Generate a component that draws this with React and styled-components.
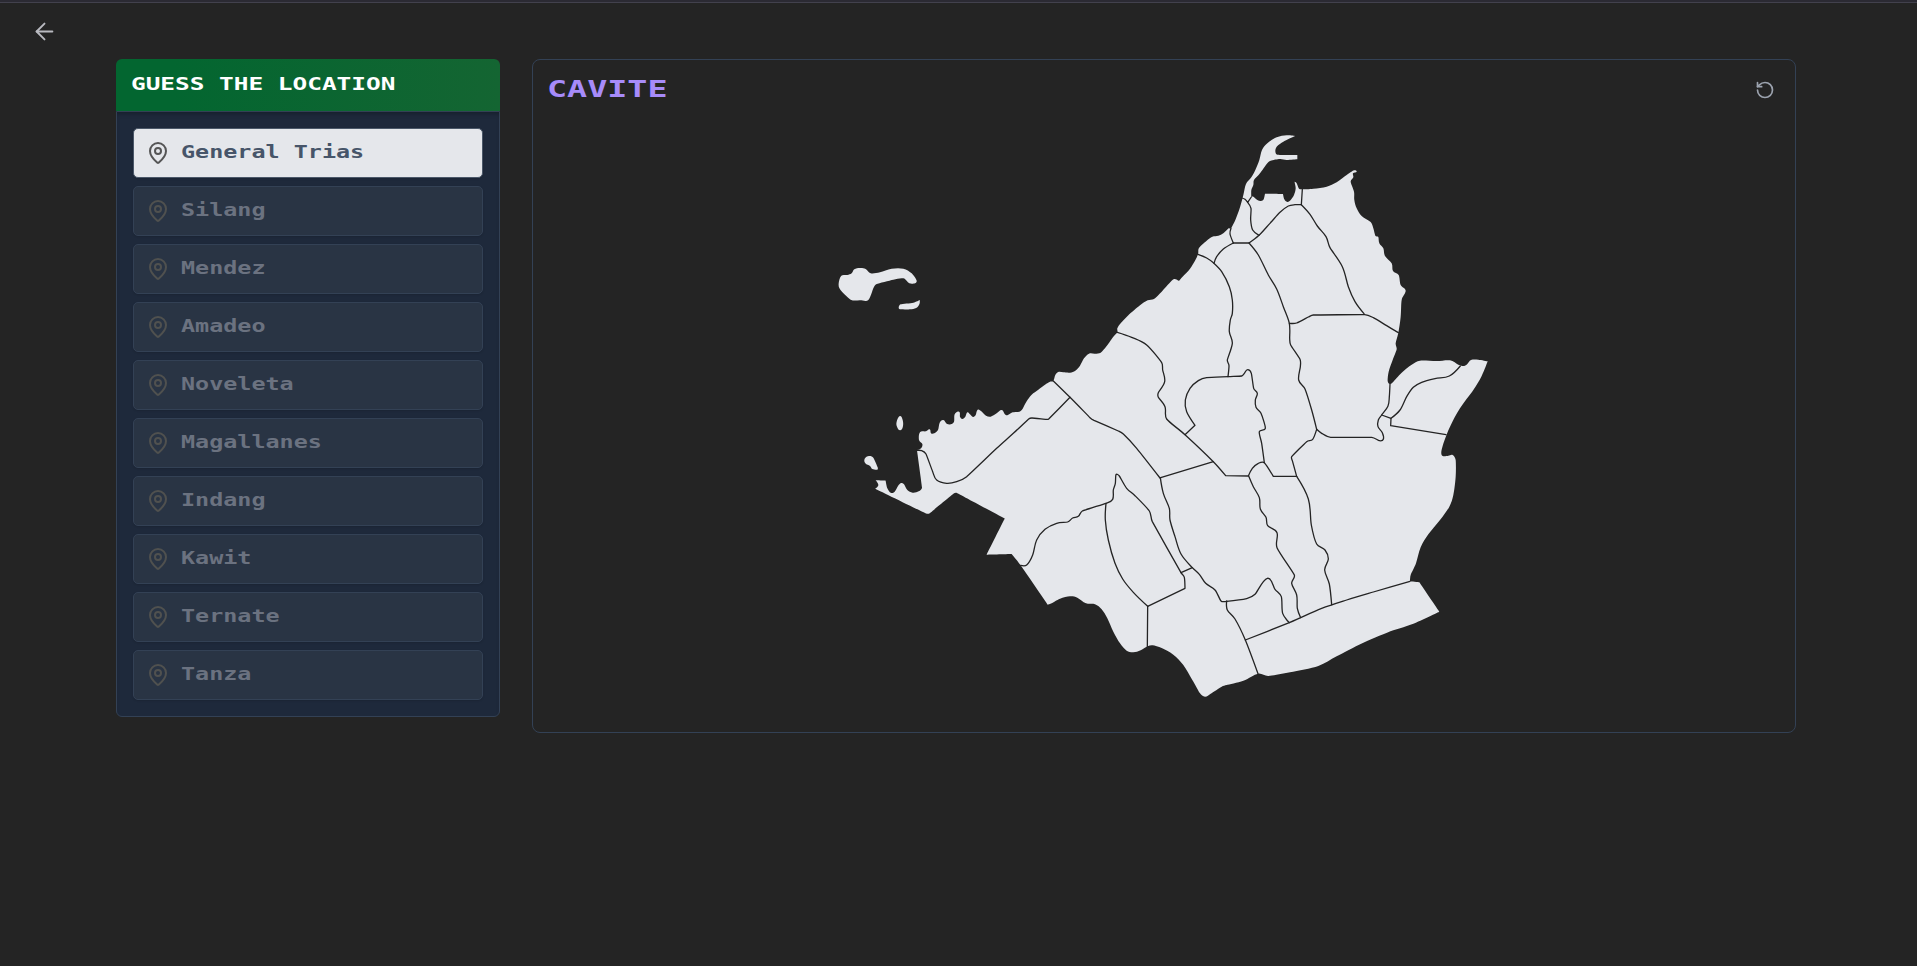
import React from "react";
import styled, { createGlobalStyle } from "styled-components";
import { ArrowLeft, MapPin, RotateCcw } from "lucide-react";

const GlobalStyle = createGlobalStyle`
  * { box-sizing: border-box; }
  body { margin: 0; background: #242424; font-family: "DejaVu Sans Mono", monospace; }
`;

const Page = styled.div`
  min-height: 966px;
  background: #242424;
  border-top: 2px solid #2b2a33;
`;
const TopRule = styled.div`
  height: 1px;
  background: #42414d;
`;
const Nav = styled.nav`
  height: 56px;
  padding: 15px 0 0 31px;
`;
const IconButton = styled.button`
  display: flex;
  padding: 0;
  border: 0;
  background: none;
  color: ${(p) => p.$color};
`;
const Columns = styled.main`
  display: flex;
  align-items: flex-start;
  gap: 32px;
  padding: 0 121px 0 116px;
`;
const Sidebar = styled.aside`
  width: 384px;
  flex: none;
`;
const SidebarHeader = styled.header`
  height: 52px;
  display: flex;
  align-items: center;
  padding: 0 16px 3px 15px;
  border-radius: 6px 6px 0 0;
  background: linear-gradient(to right, #036630 15%, #146532);
  color: #fff;
`;
const PixelText = styled.span`
  display: inline-block;
  white-space: pre;
  font-weight: 700;
  font-size: ${(p) => p.$size}px;
  line-height: 1.2;
  transform: scaleX(${(p) => p.$stretch});
  transform-origin: left center;
`;
const List = styled.ul`
  list-style: none;
  margin: 0;
  padding: 16px;
  display: flex;
  flex-direction: column;
  gap: 8px;
  background: #1e293b;
  border: 1px solid #334155;
  border-radius: 0 0 6px 6px;
  box-shadow: inset 0 4px 4px -2px rgba(0, 0, 0, 0.25);
`;
const Item = styled.li`
  height: 50px;
  display: flex;
  align-items: center;
  gap: 11px;
  padding: 0 12px;
  border-radius: 5px;
  border: 1px solid ${(p) => (p.$active ? "#4b5869" : "#334155")};
  background: ${(p) => (p.$active ? "#e5e7eb" : "#293444")};
  color: ${(p) => (p.$active ? "#475569" : "#6b7280")};
  box-shadow: 0 1px 2px rgba(0, 0, 0, 0.12);
  svg { color: ${(p) => (p.$active ? "#555" : "#50514f")}; flex: none; }
  span { margin-top: -2px; }
`;
const MapCard = styled.section`
  flex: 1;
  height: 674px;
  border: 1px solid #334155;
  border-radius: 8px;
`;
const CardHeader = styled.header`
  height: 60px;
  display: flex;
  align-items: center;
  justify-content: space-between;
  padding: 0 20px 0 14px;
  color: #a78bfa;
  span { margin-top: -2px; }
`;
const MapCanvas = styled.svg`
  display: block;
  margin: 10px auto 0;
`;

/* Survey sheets: origin of each sheet on the map plane, three units per map unit. */
const sheets = {
  A: [1180, 120],
  B: [820, 240],
  C: [1080, 220],
  D: [1240, 300],
  E: [960, 440],
  F: [1180, 440],
};

/* "A 1,2 3,4! B 5,6": a letter selects the sheet, "!" marks a hard corner. */
function parse(text) {
  let o = sheets.A;
  const out = [];
  text.trim().split(/\s+/).forEach((t) => {
    if (sheets[t]) {
      o = sheets[t];
      return;
    }
    const [x, y] = t.replace("!", "").split(",").map(Number);
    out.push({ x: o[0] + x / 3, y: o[1] + y / 3, hard: t.endsWith("!") });
  });
  return out;
}

/* Curve through the points; handles are limited by the shorter neighbouring segment. */
function smooth(text, closed) {
  const p = parse(text);
  const n = p.length;
  const at = (i) => (closed ? p[(i + n) % n] : p[Math.max(0, Math.min(n - 1, i))]);
  const handle = (i) => {
    const a = at(i - 1), b = at(i), c = at(i + 1);
    if (b.hard) return [0, 0];
    const before = Math.hypot(b.x - a.x, b.y - a.y);
    const after = Math.hypot(c.x - b.x, c.y - b.y);
    const dx = c.x - a.x, dy = c.y - a.y;
    const k = (0.36 * Math.min(before, after)) / (Math.hypot(dx, dy) || 1);
    return [dx * k, dy * k];
  };
  let d = `M${p[0].x.toFixed(2)} ${p[0].y.toFixed(2)}`;
  for (let i = 0; i < (closed ? n : n - 1); i++) {
    const a = at(i), b = at(i + 1);
    const t = handle(i), u = handle(closed ? (i + 1) % n : i + 1);
    d += `C${[a.x + t[0], a.y + t[1], b.x - u[0], b.y - u[1], b.x, b.y]
      .map((v) => v.toFixed(2))
      .join(" ")}`;
  }
  return closed ? d + "Z" : d;
}

const land = [
  `A 345,48! 320,46 290,52 262,70 246,90 238,120 226,150 214,172 198,192 190,225 180,262 166,300 153,325 146,325 130,340 115,347 97,350 80,362 57,384 54,403 45,422 30,446 12,466 0,479
   C 296,182 282,177 268,190 245,215 222,237 203,241 180,256 145,286 122,310 112,325 112,337 100,350 80,378 62,398 45,401 27,401 12,415 0,437
   B 766,392 750,398 730,397 715,396 706,405 700,423 690,425 675,434 655,449 635,464 620,484 608,506 598,515 578,517 562,526 554,522 545,510 530,520 512,530 498,527 484,514 473,509 467,525 459,531 450,523 442,517 436,530 427,537 420,530 417,515 404,523 402,545 392,553 380,551 370,540 359,548 354,570 343,580 333,580 329,568 318,574 300,577 297,600 307,612 304,624 291,631! 306,742 296,754 278,758 262,750 252,733 243,729 234,738 224,755 212,758 202,745 197,722! 167,721! 175,735 166,746! 317,820 329,820 402,760 411,759 555,836!
   E 133,238! 80,344! 155,342! 182,376 263,494! 275,490 300,476 330,469 352,473 378,490 405,493 425,508 442,535 460,575 480,610 500,632 520,637 542,631 563,619 578,616 605,624 640,644 670,675 697,720 720,760 735,770 752,761 785,740
   F 140,735 190,722 234,701 265,708 330,697 415,678 470,649 550,608 640,571 700,551 778,515! 718,427! 690,424! 692,405 708,370 722,322 745,283 780,240 808,200 820,165 827,110 827,60 818,45 805,47 788,48
   D 604,455 612,425 630,380 660,325 700,270 725,228 743,184! 715,179 693,180 682,192 672,198 655,194 630,181 590,183 540,182 515,194 485,218 460,245 450,252 443,243 446,215 458,180 470,148 467,130 475,98
   A 662,590 665,540 677,512 662,495 656,465 639,453 635,430 615,408 610,385 598,370 595,351 586,347 580,325 572,306 545,288 530,265 523,240 522,215 512,185 520,172 519,160 530,155 522,151 500,165 470,187 440,200 400,206 367,208 357,206 350,190 344,186 347,205 342,225 332,240 322,246 313,238 309,222! 255,221! 251,238 243,243 232,240 220,230 214,231! 214,210 220,195 222,180 240,160 260,132 272,122 300,117 320,120 352,118! 352,105! 292,104 286,92 292,78 310,65`,
  `B 95,100 103,88 120,84 137,87 152,100 180,97 215,86 250,86 275,100 290,122 285,130 268,130 250,115 220,119 170,132 160,145 145,180 120,181 92,179 60,148 56,130 64,107 82,105`,
  `B 299,180! 280,188 242,193 236,203 242,208 275,208 292,202 299,190`,
  `B 240,528 248,540 249,558 241,571 231,560 230,545`,
  `B 147,648 160,653 173,682 172,689 157,687 150,678 136,670 134,656`,
];

const borders = [
  "A 186,234 195,238 203,247! 214,231",
  "A 203,247 213,265 212,300 218,330 237,346",
  "A 153,325 150,342 160,369",
  "A 160,369 207,369! 237,346 270,310 300,277 325,258 345,254 364,254",
  "A 367,208 364,254",
  "A 364,254 390,283 412,318 438,350 450,383 487,440 505,500 525,545 552,581",
  "A 160,369 130,387 110,410 102,430",
  "A 54,403 80,414 102,430 125,455 148,500 157,540 157,580 151,600 148,635 157,670 142,720 C 447,437 444,470",
  "A 207,369 235,405 265,465 290,507 310,560 D 148,70 149,115 152,135 180,178 181,200 176,240 195,267 215,330 230,388",
  "D 148,70 170,69 205,51 220,45 374,44 400,53 440,77 475,98",
  "D 450,252 448,290 444,318 425,345 415,360 414,380 427,398 430,418 418,422 395,412 272,412 245,400 230,388",
  "D 425,345 453,355! 480,330 500,290 520,262 545,247 585,236 628,228 661,198",
  "D 453,355 452,377! 618,404",
  "D 230,388 218,418 200,425 155,470 157,482 170,529",
  "F 350,109 385,177 394,255 410,312 435,330 445,357 434,390 448,432 455,494",
  "C 112,337 155,352 200,375 245,428 248,450 254,485 235,518 235,532 255,560 260,597 315,644 400,725 437,767! 505,768! 517,745 535,730 553,728 580,769! 650,769",
  "C 315,644 345,616! 320,575 316,540 330,505 355,482 380,473 444,470 485,468 493,460 503,449 514,460 521,505 532,520 526,540 528,562 543,580 556,625 538,635 545,670 553,728",
  "C 400,725 242,773",
  "B 700,423 750,472 810,533 822,541 895,573 910,582 950,625 1020,714",
  "B 750,472 686,537 678,538 636,534 626,537 580,580 530,625 440,710 410,725 380,730 350,720 338,695 318,642 305,632 291,631",
  "E 601,113 610,160 628,205 630,240 645,290 663,342 697,383 718,403 737,430 765,450 783,483 800,484 F 200,476 225,463 262,415 285,448 304,470 308,520 328,548",
  "E 697,383 663,398",
  "E 182,376 200,375 218,345 230,300 255,268 290,250 323,246 338,234 355,229 367,213 438,190 458,178 460,150 466,130 468,104 478,108 500,145 525,167 568,213 577,245 663,398 673,412 675,445! 563,499",
  "E 438,190 436,240 445,300 465,370 488,417 520,457 563,499",
  "E 563,499 562,620",
  "F 140,483 142,510 165,537 196,600 234,701",
  "F 196,600 328,548 362,533 425,505 500,480 580,456 690,424",
  "F 206,108 220,140 238,173 241,207 258,232 263,257 291,278 291,323 343,405 335,430 350,465 352,505 362,533",
];

function CaviteMap() {
  return (
    <MapCanvas width="670" height="580" viewBox="829 130 670 580" role="img" aria-label="Cavite">
      {land.map((t, i) => (
        <path key={i} d={smooth(t, true)} fill="#e5e7eb" />
      ))}
      {borders.map((t, i) => (
        <path key={i} d={smooth(t, false)} fill="none" stroke="#242424" strokeWidth="1.3" strokeLinejoin="round" strokeLinecap="round" />
      ))}
    </MapCanvas>
  );
}

const places = ["General Trias", "Silang", "Mendez", "Amadeo", "Noveleta", "Magallanes", "Indang", "Kawit", "Ternate", "Tanza"];

export default function App() {
  return (
    <Page>
      <GlobalStyle />
      <TopRule />
      <Nav>
        <IconButton $color="#b9bac0" aria-label="Back">
          <ArrowLeft size={27} strokeWidth={1.7} />
        </IconButton>
      </Nav>
      <Columns>
        <Sidebar>
          <SidebarHeader>
            <PixelText $size={18} $stretch={1.355}>GUESS THE LOCATION</PixelText>
          </SidebarHeader>
          <List>
            {places.map((name, i) => (
              <Item key={name} $active={i === 0}>
                <MapPin size={24} strokeWidth={2} />
                <PixelText $size={18} $stretch={1.3}>{name}</PixelText>
              </Item>
            ))}
          </List>
        </Sidebar>
        <MapCard>
          <CardHeader>
            <PixelText $size={23.5} $stretch={1.42}>CAVITE</PixelText>
            <IconButton $color="#9ca3af" aria-label="Restart">
              <RotateCcw size={20} strokeWidth={2} />
            </IconButton>
          </CardHeader>
          <CaviteMap />
        </MapCard>
      </Columns>
    </Page>
  );
}
